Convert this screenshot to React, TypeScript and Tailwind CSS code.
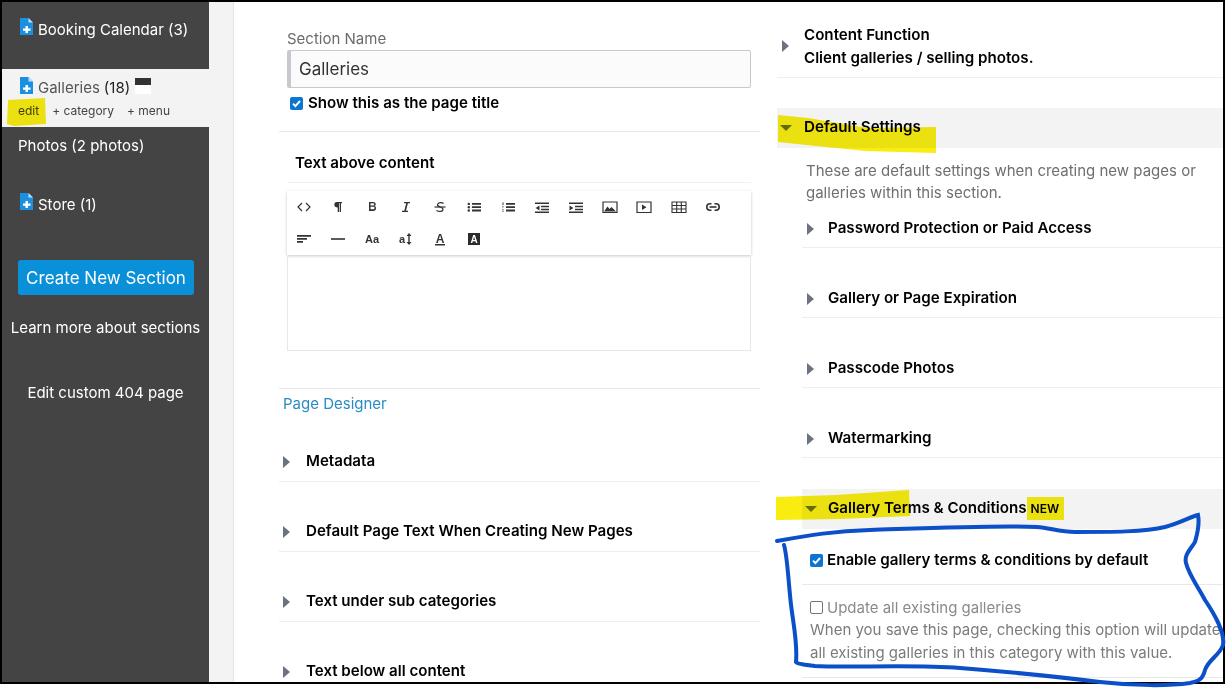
import type { ReactNode } from 'react'

function FileIcon() {
  return (
    <svg width="13" height="17" viewBox="0 0 13 17" className="shrink-0">
      <path d="M0 0h8.5L13 4.5V17H0z" fill="#1b8fe0" />
      <path d="M8.5 0L13 4.5H8.5z" fill="#bfe0f7" />
      <path d="M5.500 8h2.500v2.500h2.500v2.300H8V15H5.500v-2.200H3v-2.300h2.500z" fill="#fff" />
    </svg>
  )
}

function Arrow({ open = false }: { open?: boolean }) {
  if (open) {
    return (
      <svg width="12" height="12" viewBox="0 0 12 12" className="shrink-0">
        <path d="M0 3h12L6 9z" fill="#6b7280" />
      </svg>
    )
  }
  return (
    <svg width="10" height="12" viewBox="0 0 10 12" className="shrink-0">
      <path d="M1 0l7 6-7 6z" fill="#6b7280" />
    </svg>
  )
}

function Check({ on = true }: { on?: boolean }) {
  if (!on) return <span className="block h-[13px] w-[13px] shrink-0 rounded-[2px] border border-[#767676] bg-white" />
  return (
    <span className="flex h-[13px] w-[13px] shrink-0 items-center justify-center rounded-[2px] bg-[#0b75d1]">
      <svg width="11" height="11" viewBox="0 0 11 11">
        <path d="M2 5.700l2.400 2.400L9 3" fill="none" stroke="#fff" strokeWidth="1.900" />
      </svg>
    </span>
  )
}

const toolIcons: ReactNode[][] = [
  [
    <path key="a" d="M6 4L2 8l4 4M10 4l4 4-4 4" fill="none" stroke="#333" strokeWidth="1.200" />,
    <path key="b" d="M6.500 3H12v1.300h-1V13H9.700V4.300H9V13H7.700V8.500C5.500 8.500 4.300 7.300 4.300 5.700 4.300 4.200 5.200 3 6.500 3z" fill="#333" />,
    <path key="c" d="M5 3h4c1.700 0 2.700.9 2.700 2.200 0 1-.5 1.600-1.300 1.900 1 .3 1.700 1 1.700 2.200 0 1.600-1.200 2.700-3 2.700H5zm1.500 1.300v2.300h2.300c.9 0 1.400-.5 1.400-1.200s-.5-1.100-1.400-1.100zm0 3.500v2.500h2.500c1 0 1.600-.5 1.600-1.300s-.6-1.200-1.600-1.200z" fill="#333" />,
    <path key="d" d="M6 3h6v1.300H9.900L8 11.700h2V13H4v-1.300h2.300l1.900-7.400H6z" fill="#333" />,
    <g key="e" fill="none" stroke="#333" strokeWidth="1.200">
      <path d="M11.500 4.500C10.500 3.300 6 3 5.500 5.500c-.3 1.500 1.500 2 2.800 2.500 2 .7 3 1.300 2.600 3-.5 2-5 1.800-6.400.3" />
      <path d="M2.500 8h11" />
    </g>,
    <g key="f" fill="#333">
      <path d="M6 4h9v1.800H6zM6 7.300h9v1.800H6zM6 10.600h9v1.800H6z" />
      <circle cx="2.800" cy="4.900" r="1.200" />
      <circle cx="2.800" cy="8.200" r="1.200" />
      <circle cx="2.800" cy="11.500" r="1.200" />
    </g>,
    <g key="g" fill="#333">
      <path d="M6 4h9v1.800H6zM6 7.300h9v1.800H6zM6 10.600h9v1.800H6z" />
      <path d="M2.500 3.500h1v2.500h-1zM2 7.500h1.800v.8H2zM2 10.500h1.800v.6H2zM2 11.800h1.800v.6H2z" />
    </g>,
    <g key="h" fill="#333">
      <path d="M1 3.500h14V5H1zM7 6.800h8v1.500H7zM7 9.800h8v1.500H7zM1 12.600h14V14H1z" />
      <path d="M5.500 6.500v5L1.500 9z" />
    </g>,
    <g key="i" fill="#333">
      <path d="M1 3.500h14V5H1zM7 6.800h8v1.500H7zM7 9.800h8v1.500H7zM1 12.600h14V14H1z" />
      <path d="M1.500 6.500v5l4-2.500z" />
    </g>,
    <g key="j">
      <path d="M1 3h14v10.500H1z" fill="none" stroke="#333" strokeWidth="1.200" />
      <path d="M2 12.500l3.500-5 2 2.500 2-2 4.500 4.500z" fill="#333" />
    </g>,
    <g key="k">
      <path d="M1 3h14v10.500H1z" fill="none" stroke="#333" strokeWidth="1.200" />
      <path d="M6 5.500v5.500l4.500-2.700z" fill="#333" />
    </g>,
    <path key="l" d="M1 3h14v10.500H1zM1 6.500h14M1 10h14M5.700 3v10.500M10.300 3v10.500" fill="none" stroke="#333" strokeWidth="1.100" />,
    <g key="m" fill="none" stroke="#333" strokeWidth="1.600">
      <path d="M6.500 4.800H5a3.200 3.200 0 000 6.400h1.500M9.500 4.800H11a3.200 3.200 0 010 6.400H9.500" />
      <path d="M4.500 8h7" />
    </g>,
  ],
  [
    <path key="a" d="M1 4h14v1.700H1zM1 7h10v1.700H1zM1 10h6v1.700H1z" fill="#333" />,
    <path key="b" d="M1 7.200h14v1.600H1z" fill="#333" />,
    <text key="c" x="8" y="12" textAnchor="middle" fontSize="11" fontWeight="600" fill="#333" fontFamily="Liberation Sans, sans-serif">Aa</text>,
    <g key="d" fill="#333">
      <text x="1" y="12" fontSize="11" fontWeight="600" fontFamily="Liberation Sans, sans-serif">a</text>
      <path d="M11 2l2.500 3h-1.800v6h1.800L11 14l-2.500-3h1.800V5H8.500z" />
    </g>,
    <g key="e" fill="#333">
      <text x="8" y="11.500" textAnchor="middle" fontSize="12" fontWeight="700" fontFamily="Liberation Sans, sans-serif">A</text>
      <path d="M3 13h10v1.500H3z" />
    </g>,
    <g key="f">
      <path d="M2 2h12v12H2z" fill="#2b2b2b" />
      <text x="8" y="12" textAnchor="middle" fontSize="10" fontWeight="700" fill="#fff" fontFamily="Liberation Sans, sans-serif">A</text>
    </g>,
  ],
]

function Toolbar() {
  return (
    <div className="flex h-[64px] flex-col justify-center gap-[16px] pl-[9px] shadow-[0_1px_3px_rgba(0,0,0,0.22)]">
      {toolIcons.map((row, i) => (
        <div key={i} className="flex h-[16px] gap-[18.050px]">
          {row.map((icon, j) => (
            <svg key={j} width="16" height="16" viewBox="0 0 16 16">
              {icon}
            </svg>
          ))}
        </div>
      ))}
    </div>
  )
}

function LeftRow({ label }: { label: string }) {
  return (
    <div className="flex h-[70px] items-center gap-[14px] border-b border-[#eceef0] pl-[3px] pt-[30px] text-[15.100px] font-semibold text-black">
      <Arrow />
      {label}
    </div>
  )
}

function SubRow({ label }: { label: string }) {
  return (
    <div className="flex h-[70px] items-center gap-[12px] border-b border-[#eceef0] pl-[4px] pt-[32px] text-[15.150px] font-semibold text-black">
      <Arrow />
      {label}
    </div>
  )
}

export default function App() {
  return (
    <div className="relative h-[688px] w-[1228px] overflow-hidden bg-white font-['Inter','Noto_Sans',sans-serif]">
      <div className="flex h-[684px] w-[1225px] overflow-hidden border-2 border-black">
        <aside className="flex w-[207px] shrink-0 flex-col bg-[#444] text-[15px] text-white">
          <div className="flex h-[67px] items-start gap-[5px] pl-[18px] pt-[16px] leading-[22px]">
            <FileIcon />
            <span className="mt-[1px]">Booking Calendar (3)</span>
          </div>
          <div className="h-[58px] bg-[#f3f3f3] text-[#222]">
            <div className="flex items-start gap-[5px] pl-[18px] pt-[8px]">
              <FileIcon />
              <span className="leading-[22px] text-[#555]">Galleries</span>
              <span className="-ml-[1px] leading-[22px]">(18)</span>
              <span className="mt-[1px] h-[16px] w-[16px] border-t-[7px] border-[#333] bg-white" />
            </div>
            <div className="mt-[3px] flex gap-[13px] pl-[16px] text-[12px] leading-[18px] text-[#444]">
              <span>edit</span>
              <span>+ category</span>
              <span>+ menu</span>
            </div>
          </div>
          <div className="pl-[16px] pt-[8px] leading-[22px]">Photos (2 photos)</div>
          <div className="flex items-start gap-[5px] pl-[18px] pt-[36px] leading-[22px]">
            <FileIcon />
            <span className="mt-[1px]">Store (1)</span>
          </div>
          <button className="ml-[16px] mt-[44px] h-[35px] w-[176px] rounded-[3px] bg-[#0a8fd9] pt-[2px] text-[17px] text-white">
            Create New Section
          </button>
          <div className="mt-[22px] text-center leading-[22px]">Learn more about sections</div>
          <div className="mt-[43px] text-center leading-[22px]">Edit custom 404 page</div>
        </aside>

        <div className="w-[25px] shrink-0 border-r border-[#e4e4e4] bg-[#f3f3f3]" />

        <main className="flex min-w-0 flex-1 overflow-hidden">
          <section className="ml-[45px] w-[481px] shrink-0">
            <div className="border-b border-[#e6e8ea] pb-[18px] pl-[8px] pr-[9px] pt-[27px]">
              <label className="block text-[15px] leading-[20px] text-[#6b6b6b]">Section Name</label>
              <div className="mt-[1px] flex h-[38px] items-center rounded-[2px] border border-[#c6c9cd] border-l-[4px] bg-[#fbfbfc] pl-[8px] pt-[1px] text-[17px] text-[#333]">
                Galleries
              </div>
              <div className="mt-[5px] flex items-center gap-[5px] pl-[3px] text-[15.100px] font-semibold leading-[20px] text-black">
                <Check />
                Show this as the page title
              </div>
            </div>
            <div className="pl-[8px] pr-[9px]">
              <div className="flex h-[51px] items-end border-b border-[#f0f1f2] pb-[9px] pl-[8px] text-[15.100px] font-semibold leading-[20px] text-black">
                Text above content
              </div>
              <div className="mt-[8px]">
                <Toolbar />
              </div>
              <div className="h-[96px] border border-t-0 border-[#e6e8ea]" />
            </div>
            <div className="mt-[37px] border-t border-[#e6e8ea] pl-[4px] pt-[5px] text-[15px] leading-[20px] text-[#2b8bc4]">
              Page Designer
            </div>
            <div className="-mt-[2px]">
              <LeftRow label="Metadata" />
              <LeftRow label="Default Page Text When Creating New Pages" />
              <LeftRow label="Text under sub categories" />
              <LeftRow label="Text below all content" />
            </div>
          </section>

          <section className="ml-[17px] min-w-0 flex-1">
            <div className="flex h-[76px] items-center gap-[13px] border-b border-[#eceef0] pl-[4px] pt-[13px] text-[15.150px] font-semibold leading-[23px] text-black">
              <Arrow />
              <div>
                <div>Content Function</div>
                <div>Client galleries / selling photos.</div>
              </div>
            </div>
            <div className="mt-[30px] flex h-[40px] items-center gap-[12px] bg-[#f3f3f3] pl-[3px] text-[15.150px] font-semibold text-black">
              <Arrow open />
              <span className="-mt-[2px]">Default Settings</span>
            </div>
            <div className="pl-[25px]">
              <p className="pl-[4px] pt-[12px] text-[15px] leading-[22px] text-[#6f6f6f]">
                These are default settings when creating new pages or galleries within this section.
              </p>
              <div className="-mt-[26px]">
                <SubRow label="Password Protection or Paid Access" />
                <SubRow label="Gallery or Page Expiration" />
                <SubRow label="Passcode Photos" />
                <SubRow label="Watermarking" />
              </div>
              <div className="mt-[31px] flex h-[40px] items-center gap-[11px] bg-[#f3f3f3] pl-[3px] text-[15.150px] font-semibold text-black">
                <Arrow open />
                <span className="-mt-[2px]">Gallery Terms &amp; Conditions</span>
                <span className="-ml-[7px] -mt-[1px] text-[12px] font-semibold">NEW</span>
              </div>
              <div className="flex h-[56px] items-center gap-[4px] border-b border-[#e6e8ea] pl-[8px] pt-[8px] text-[15.150px] font-semibold text-black">
                <Check />
                Enable gallery terms &amp; conditions by default
              </div>
              <div className="border-b border-[#e6e8ea] pb-[13px] pl-[8px] pt-[11px] text-[15px] leading-[23px] text-[#7b7b7b]">
                <div className="flex h-[22px] items-center gap-[4px]">
                  <Check on={false} />
                  <span className="text-[#8a8a8a]">Update all existing galleries</span>
                </div>
                <div className="whitespace-nowrap">When you save this page, checking this option will update</div>
                <div>all existing galleries in this category with this value.</div>
              </div>
            </div>
          </section>
        </main>
      </div>

      {/* marker highlights drawn on the screenshot */}
      <svg width="1228" height="688" className="pointer-events-none absolute left-0 top-0 mix-blend-multiply">
        <g fill="#f8ec10">
          <path d="M8 100l37-2 1 26-32 2-7-2z" />
          <path d="M778 115l30 3 60 10 68-1v26l-70-2-50-5-38-4z" />
          <path d="M776 497l60-2 73-5 1 26-70 3-64 1z" />
          <path d="M1027 497h37v23h-37z" />
        </g>
      </svg>
      <svg width="1228" height="688" className="pointer-events-none absolute left-0 top-0">
        <path
          d="M777 541C810 535 835 531 870 530C930 528 1000 525 1037 527C1050 528 1060 532 1075 532C1110 532 1145 532 1165 527C1180 523 1190 517 1198 515C1200 525 1197 535 1195 542C1190 550 1184 555 1186 563C1189 575 1197 585 1205 600C1215 615 1225 632 1223 645C1220 655 1208 660 1205 670C1203 678 1200 681 1190 683C1170 686 1135 686 1100 682C1060 677 1010 672 960 668C910 664 850 668 815 666C805 665 797 664 796 662C798 640 792 620 790 595C788 575 787 555 784 545"
          fill="none"
          stroke="#0b50c8"
          strokeWidth="4"
          strokeLinecap="round"
        />
      </svg>
    </div>
  )
}
